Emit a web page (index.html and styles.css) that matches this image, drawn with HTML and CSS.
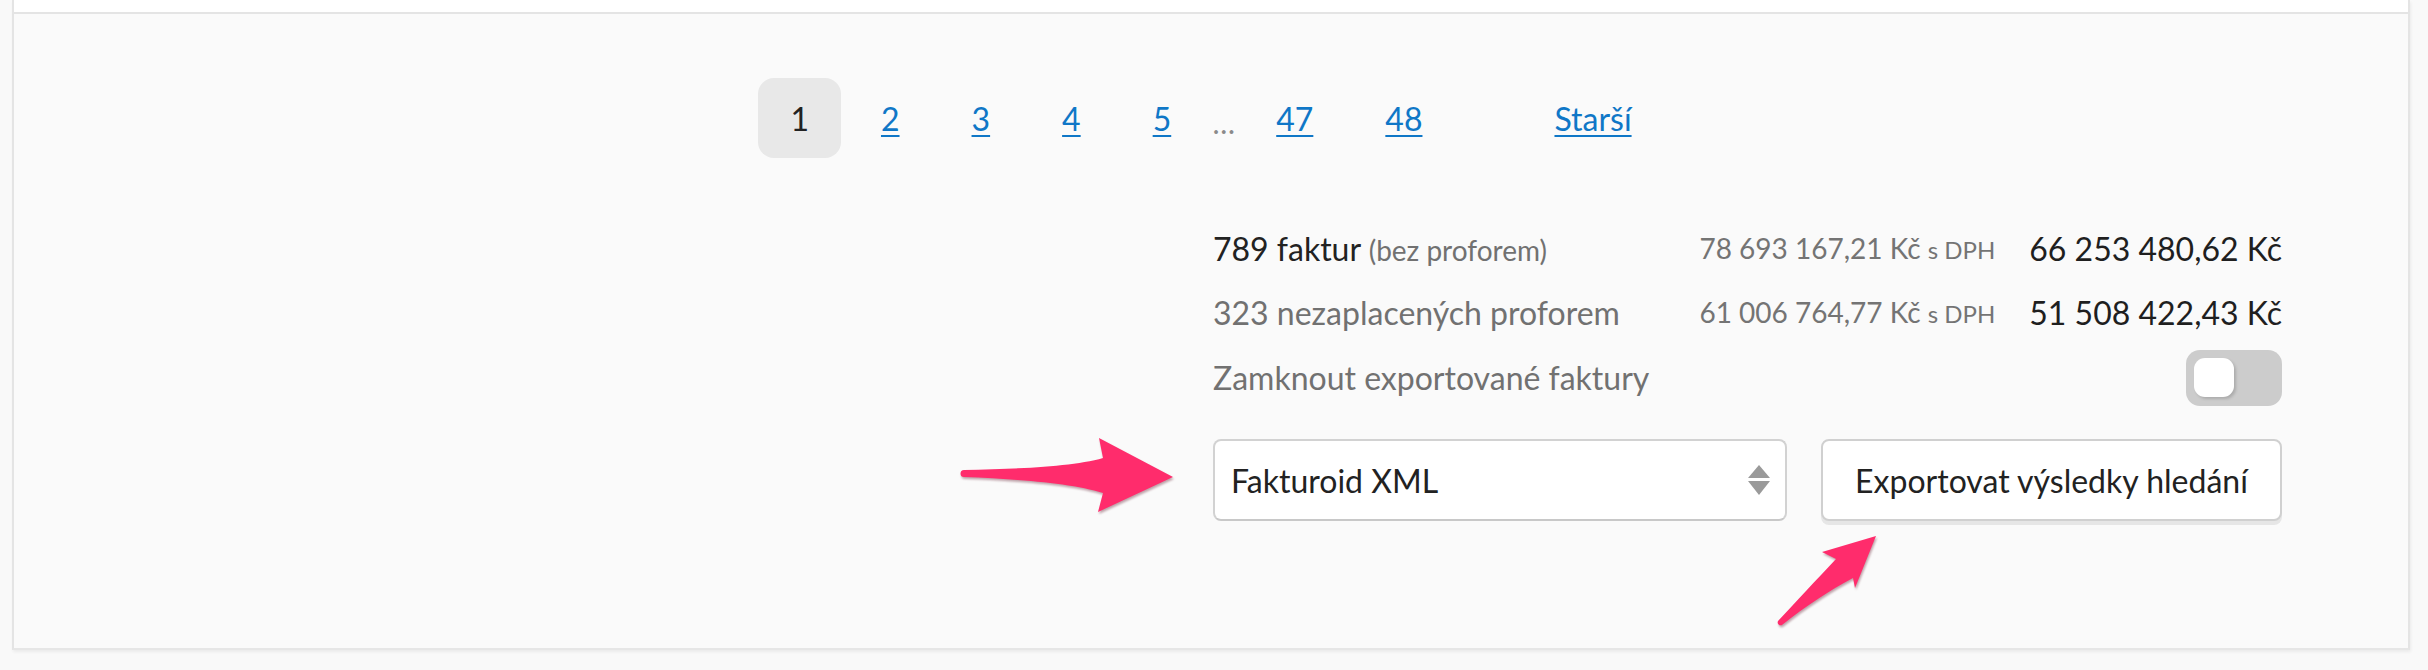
FILE: index.html
```html
<!DOCTYPE html>
<html lang="cs">
<head>
<meta charset="utf-8">
<title>Faktury</title>
<link rel="stylesheet" href="styles.css">
</head>
<body>
<div class="page">
  <div class="card">
    <div class="card-top"></div>
    <div class="card-footer">
      <nav class="pagination">
        <span class="pg current">1</span>
        <a class="pg" href="#">2</a>
        <a class="pg" href="#">3</a>
        <a class="pg" href="#">4</a>
        <a class="pg" href="#">5</a>
        <span class="gap">…</span>
        <a class="pg" href="#">47</a>
        <a class="pg" href="#">48</a>
        <a class="pg next" href="#">Starší</a>
      </nav>
      <div class="summary">
        <div class="totals">
          <div class="label"><span class="strong">789 faktur</span> <span class="note">(bez proforem)</span></div>
          <div class="gross">78 693 167,21 Kč <span class="vat">s DPH</span></div>
          <div class="net">66 253 480,62 Kč</div>

          <div class="label muted">323 nezaplacených proforem</div>
          <div class="gross">61 006 764,77 Kč <span class="vat">s DPH</span></div>
          <div class="net">51 508 422,43 Kč</div>

          <div class="label muted wide">Zamknout exportované faktury</div>
          <div class="switch-cell"><span class="switch"><span class="knob"></span></span></div>
        </div>
        <div class="export">
          <div class="select">
            <span class="select-value">Fakturoid XML</span>
            <svg class="select-caret" width="22" height="31" viewBox="0 0 22 31" aria-hidden="true">
              <path d="M0 13 L11 0 L22 13 Z" fill="#9a9a9a"/>
              <path d="M0 16 L22 16 L11 30 Z" fill="#9a9a9a"/>
            </svg>
          </div>
          <button class="btn" type="button">Exportovat výsledky hledání</button>
        </div>
      </div>
    </div>
  </div>

  <svg class="arrow arrow-one" width="235" height="90" viewBox="0 0 235 90" aria-hidden="true">
    <path d="M14 40 C65 39 122 37 153 28 L149 8 L223 47 L148 82 L153 63 C122 53 65 49 14 47 A3.5 3.5 0 0 1 14 40 Z" fill="#ff2c6c"/>
  </svg>
  <svg class="arrow arrow-two" width="115" height="104" viewBox="0 0 115 104" aria-hidden="true">
    <path d="M106 8 L52 24 L66 31 C46 52 26 74 8 93 A3 3 0 0 0 12 97 C36 78 60 62 83 50 L85 60 Z" fill="#ff2c6c"/>
  </svg>
</div>
</body>
</html>
```
FILE: styles.css
```css
html, body {
  margin: 0;
  padding: 0;
}
body {
  width: 2428px;
  height: 670px;
  overflow: hidden;
  background: #f9f9f9;
  font-family: Lato, "Open Sans", "Liberation Sans", sans-serif;
  color: #222;
}
.page {
  position: relative;
  padding: 0 18px 0 12px;
  height: 670px;
  box-sizing: border-box;
}
.card {
  border-left: 2px solid #e4e4e4;
  border-right: 2px solid #e4e4e4;
  border-bottom: 2px solid #e6e6e6;
  box-shadow: 1px 2px 3px rgba(0, 0, 0, 0.06);
  background: #fafafa;
}
.card-top {
  height: 12px;
  background: #fff;
  border-bottom: 2px solid #e4e4e4;
}
.card-footer {
  padding: 64px 0 127px 0;
  display: flex;
  flex-direction: column;
}

/* pagination */
.pagination {
  display: flex;
  justify-content: center;
  align-items: center;
  gap: 8px;
  font-size: 32px;
  height: 80px;
}
.pg {
  display: flex;
  align-items: center;
  height: 80px;
  padding: 0 32px;
  color: #0f77c7;
  text-decoration: underline;
  text-decoration-thickness: 2px;
  text-underline-offset: 4px;
  border-radius: 16px;
}
.pg.current {
  background: #e8e8e8;
  color: #222;
  text-decoration: none;
}
.pg.next {
  margin-left: 60px;
}
.gap {
  color: #8a8a8a;
  width: 25px;
  text-align: center;
  font-size: 30px;
  padding-top: 8px;
}

/* summary */
.summary {
  align-self: flex-end;
  width: 1069px;
  margin-top: 58px;
  margin-right: 126px;
}
.totals {
  display: grid;
  grid-template-columns: 1fr auto auto;
  grid-template-rows: 64px 64px 67px;
  column-gap: 34px;
  align-items: center;
}
.label {
  font-size: 32px;
  white-space: nowrap;
}
.label.wide {
  grid-column: 1 / 3;
}
.muted {
  color: #717171;
}
.note {
  font-size: 28px;
  color: #717171;
}
.gross {
  font-size: 28px;
  color: #747474;
  text-align: right;
  white-space: nowrap;
}
.vat {
  font-size: 24px;
}
.net {
  font-size: 32px;
  color: #1f1f1f;
  text-align: right;
  white-space: nowrap;
}
.switch-cell {
  display: flex;
  justify-content: flex-end;
}
.switch {
  display: block;
  position: relative;
  width: 96px;
  height: 56px;
  border-radius: 14px;
  background: #cccccc;
}
.knob {
  position: absolute;
  left: 8px;
  top: 8px;
  width: 40px;
  height: 39px;
  border-radius: 11px;
  background: #fff;
  box-shadow: 2px 2px 3px rgba(0, 0, 0, 0.16);
}

/* export */
.export {
  display: flex;
  gap: 34px;
  margin-top: 28px;
}
.select {
  width: 574px;
  height: 82px;
  box-sizing: border-box;
  display: flex;
  align-items: center;
  justify-content: space-between;
  padding: 0 15px 0 16px;
  background: #fff;
  border: 2px solid #d2d2d2;
  border-bottom-color: #c8c8c8;
  border-radius: 8px;
  font-size: 32px;
  color: #222;
}
.select-caret {
  display: block;
}
.btn {
  width: 461px;
  height: 82px;
  box-sizing: border-box;
  background: #fff;
  border: 2px solid #d0d0d0;
  border-radius: 8px;
  box-shadow: 0 4px 0 #e6e6e6;
  font-family: Lato, "Open Sans", "Liberation Sans", sans-serif;
  font-size: 32px;
  color: #222;
  padding: 0;
  cursor: pointer;
}

/* annotation arrows */
.arrow {
  position: absolute;
  filter: drop-shadow(1px 2px 1px rgba(80, 0, 20, 0.35));
}
.arrow-one {
  left: 950px;
  top: 430px;
}
.arrow-two {
  left: 1770px;
  top: 528px;
}
```
